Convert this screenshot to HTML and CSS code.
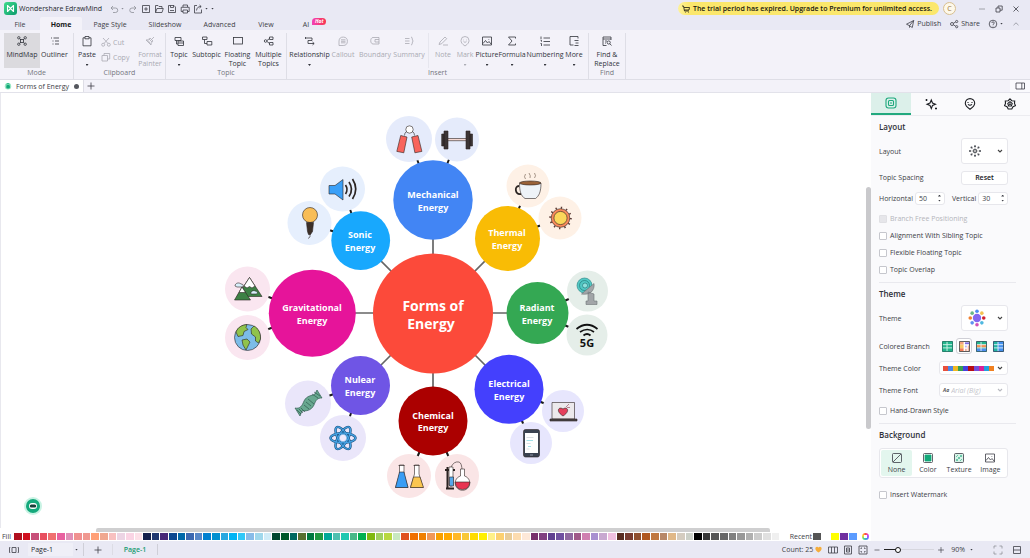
FILE: index.html
```html
<!DOCTYPE html>
<html lang="en">
<head>
<meta charset="utf-8">
<title>Wondershare EdrawMind</title>
<link rel="stylesheet" href="styles.css">
</head>
<body>
<svg class="sprite" aria-hidden="true">
  <defs>
    <linearGradient id="logo-fill" x1="0" y1="0" x2="1" y2="1"><stop offset="0" stop-color="#3fdc8c"/><stop offset="1" stop-color="#0c9a6c"/></linearGradient>
  </defs>
  <symbol id="i-undo" viewBox="0 0 12 12"><path d="M5 3 3 5l2 2M3 5h4.500a2 2 0 0 1 0 4.500H5"/></symbol>
  <symbol id="i-redo" viewBox="0 0 12 12"><path d="M7 3l2 2-2 2M9 5H5a2 2 0 0 0 0 4.500h2"/></symbol>
  <symbol id="i-new" viewBox="0 0 12 12"><path d="M2.500 2.500h7v7h-7zM6 4.200v3.600M4.200 6h3.600"/></symbol>
  <symbol id="i-open" viewBox="0 0 12 12"><path d="M2.500 9.500v-7h2.500l1 1h3v2M2.500 9.500h6.500l1.300-4H4z"/></symbol>
  <symbol id="i-save" viewBox="0 0 12 12"><path d="M2.500 2.500h5.500l1.500 1.500v5.500h-7zM4.500 2.500v2h3v-2M4 7.500h4"/></symbol>
  <symbol id="i-print" viewBox="0 0 12 12"><path d="M4 4V2h4.500v2M4 8.500H2.200V4.300h8v4.200H8.500M4 7h4.500v3H4z"/></symbol>
  <symbol id="i-export" viewBox="0 0 12 12"><path d="M5 2.500H2.500v7.500h7V6.500M4.500 7.500c.3-2.500 1.500-4 4.500-4M7.500 2l1.700 1.500L7.500 5"/></symbol>
  <symbol id="i-cart" viewBox="0 0 12 12"><path d="M2 3h1.500l1 5H9M4 4.500h5.500L9 7H4.500M5 9.500h.5M8.500 9.500H9"/></symbol>
  <symbol id="i-min" viewBox="0 0 12 12"><path d="M3 6h6"/></symbol>
  <symbol id="i-restore" viewBox="0 0 12 12"><path d="M3 5h4v4H3zM5 5V3h4.200v4.200H7"/></symbol>
  <symbol id="i-close" viewBox="0 0 12 12"><path d="M3.500 3.500l5 5M8.500 3.500l-5 5"/></symbol>
  <symbol id="i-send" viewBox="0 0 12 12"><path d="M2.500 6.200 9.700 2.500 8.300 9.500 5.500 7.700zM9.700 2.500 5.500 7.700v2"/></symbol>
  <symbol id="i-share" viewBox="0 0 12 12"><circle cx="4" cy="6" r="1.500"/><circle cx="8.700" cy="3.500" r="1.100"/><circle cx="8.700" cy="8.700" r="1.100"/><path d="M5.300 5.300 7.700 4M5.300 6.800l2.400 1.400"/></symbol>
  <symbol id="i-help" viewBox="0 0 12 12"><circle cx="6" cy="6" r="3.800"/><path d="M4.800 5c0-1.600 2.500-1.500 2.500 0C7.300 6 6 5.800 6 6.900M6 7.800v.6"/></symbol>
  <symbol id="i-up" viewBox="0 0 12 12"><path d="M3.500 7.200 6 4.800l2.500 2.400"/></symbol>
  <symbol id="i-down" viewBox="0 0 8 8"><path d="M2 3l2 2 2-2"/></symbol>
  <symbol id="i-mindmap" viewBox="0 0 12 12"><rect x="4.500" y="4.500" width="3" height="3"/><circle cx="2.800" cy="2.800" r="1.200"/><circle cx="9.200" cy="2.800" r="1.200"/><circle cx="2.800" cy="9.200" r="1.200"/><circle cx="9.200" cy="9.200" r="1.200"/><path d="M3.600 3.600l1 1M8.400 3.600l-1 1M3.600 8.400l1-1M8.400 8.400l-1-1"/></symbol>
  <symbol id="i-outliner" viewBox="0 0 12 12"><path d="M2 3h1M4.500 3H10M3.500 6h1M6 6h4M3.500 9h1M6 9h4"/></symbol>
  <symbol id="i-paste" viewBox="0 0 12 12"><path d="M4 2.800H2v8h8v-8H8M4 1.500h4v2.300H4z"/></symbol>
  <symbol id="i-cut" viewBox="0 0 12 12"><circle cx="3.200" cy="8.700" r="1.500"/><circle cx="8.800" cy="8.700" r="1.500"/><path d="M8 7.500 3 2M4 7.500 9 2"/></symbol>
  <symbol id="i-copy" viewBox="0 0 12 12"><path d="M2 4.500h5.500V10H2zM4 4.500v-2h5.700V8H7.500"/></symbol>
  <symbol id="i-brush" viewBox="0 0 12 12"><path d="M2 5c2 0 3-1 4-2l3 3C8 7 7 8 7 10zM7.500 4.500 10 2M3.500 5l3 3.500M5 4l3 3"/></symbol>
  <symbol id="i-topic" viewBox="0 0 12 12"><path d="M2 2.500h6v3H2zM3.500 5.500V9h1.500M5 6h5.500v4.500H5zM5 8h5.500"/></symbol>
  <symbol id="i-subtopic" viewBox="0 0 12 12"><path d="M1.500 2h4.500v2.500H1.500zM3.500 4.500v4h2.500M6 6.500h4.800v3.500H6z"/></symbol>
  <symbol id="i-floating" viewBox="0 0 12 12"><rect x="1.500" y="2.500" width="9" height="6.500"/></symbol>
  <symbol id="i-multiple" viewBox="0 0 12 12"><circle cx="2.600" cy="6" r="1.300"/><path d="M4 5.500 6.500 3.500M4 6.500l2.500 2M6.500 2h3.500v2.500H6.500zM6.500 7.500h3.500V10H6.500z"/></symbol>
  <symbol id="i-relation" viewBox="0 0 12 12"><path d="M1.500 3h6.500v2.500H4v3h6M8.500 7l1.700 1.500L8.500 10M1.500 2v2"/></symbol>
  <symbol id="i-callout" viewBox="0 0 12 12"><path d="M2 10.500V6a4.200 4.200 0 1 1 4.200 4.500zM4 4.800h4.500M4 6.300h4.500M4 7.800h4.500"/></symbol>
  <symbol id="i-boundary" viewBox="0 0 12 12"><path d="M10 2.500H4C1 2.500 1 9 4 9h6zM6 4.500h4M6 4.500v2.500h4"/></symbol>
  <symbol id="i-summary" viewBox="0 0 12 12"><path d="M2 3.500h4.500M2 6h4.500M2 8.500h4.500M8 2q1.300 0 1.300 2 0 2 1 2-1 0-1 2 0 2-1.300 2"/></symbol>
  <symbol id="i-note" viewBox="0 0 12 12"><path d="M2 9.500 3 7l5-5 1.700 1.700-5 5zM6 10h5"/></symbol>
  <symbol id="i-mark" viewBox="0 0 12 12"><path d="M6 11C3 9 2 7.500 2 5.500a4 4 0 0 1 8 0C10 7.500 9 9 6 11zM4.500 4.700v.6M7.500 4.700v.6M4.500 6.700q1.500 1.200 3 0"/></symbol>
  <symbol id="i-picture" viewBox="0 0 12 12"><path d="M1.500 2h9v8h-9zM2 8.500l2.500-3 2 2.500 1.500-1.500 2 2.500M7.800 4v.6"/></symbol>
  <symbol id="i-sigma" viewBox="0 0 12 12"><path d="M9.500 3.500V2h-7L6 6l-3.500 4h7V8.500"/></symbol>
  <symbol id="i-number" viewBox="0 0 12 12"><path d="M2 1.500V4M1.500 5.200h1v1.500M1.500 8.500h1V11M4.500 3H11M4.500 6.500H11M4.500 10H11"/></symbol>
  <symbol id="i-more" viewBox="0 0 12 12"><path d="M10 3.500V1.500H2V10h3.500M6.500 5.500h4M7.500 8h3M6.500 10.500h4"/></symbol>
  <symbol id="i-find" viewBox="0 0 12 12"><path d="M10 5V2H2v8.500h3.500M2 4h8M4 6h2M4 8h1"/><circle cx="7.700" cy="7.500" r="1.600"/><path d="M8.800 8.700l1.700 1.800"/></symbol>
  <symbol id="i-plus" viewBox="0 0 12 12"><path d="M6 2.500v7M2.500 6h7"/></symbol>
  <symbol id="i-panel" viewBox="0 0 12 12"><path d="M2 3h8.500v6H2zM7.800 3v6"/></symbol>
  <symbol id="i-tab-layout" viewBox="0 0 12 12"><rect x="1" y="1" width="10" height="10" rx="2.500"/><rect x="3.500" y="3.500" width="5" height="5" rx="1"/><path d="M5 6h2"/></symbol>
  <symbol id="i-tab-star" viewBox="0 0 12 12"><path d="M6.300 2 7.500 5l3 1.200-3 1.300-1.200 3-1.300-3L2 6.200 5 5zM1.500 1v2M.500 2h2M11 9.500v2M10 10.500h2"/></symbol>
  <symbol id="i-tab-mark" viewBox="0 0 12 12"><path d="M6 11.300C2.500 9 1.300 7.500 1.300 5.300a4.700 4.700 0 0 1 9.400 0C10.700 7.500 9.500 9 6 11.300zM4 4v.9M8 4v.9M4 6.300q2 1.900 4 0"/></symbol>
  <symbol id="i-tab-style" viewBox="0 0 12 12"><path d="M6 .8 7.800 2.700l2.900.2-.2 2.600 1 2.200-2.500 1L7.800 11H4.200L3 8.700l-2.500-1 1-2.200-.2-2.600 2.900-.2z"/><path d="M6 3.800 8.200 5.400 7.400 8H4.600L3.800 5.400z"/><circle cx="6" cy="6.200" r=".4"/></symbol>
  <symbol id="i-none" viewBox="0 0 12 12"><rect x="1.500" y="1.500" width="9" height="9" rx="1"/><path d="M2 10l8-8"/></symbol>
  <symbol id="i-color" viewBox="0 0 12 12"><rect x="1.500" y="1.500" width="9" height="9" rx="1"/><path d="M3 3h6v6H3z" fill="#12a878" stroke="#12a878"/></symbol>
  <symbol id="i-texture" viewBox="0 0 12 12"><rect x="1.500" y="1.500" width="9" height="9" rx="1" fill="#d8f4e8"/><path d="M3 5l2-2M3 9l6-6M7 9l2-2M3 7l2 2M5 5l2 2M7 3l2 2" stroke="#3fb48e" stroke-width=".7"/></symbol>
  <symbol id="i-book" viewBox="0 0 12 12"><path d="M4 3.500h4v5H4M4 3.500v5M1.500 3.500v5M10.500 3.500v5M1.500 3.500h.8M9.700 3.500h.8M1.500 8.500h.8M9.700 8.500h.8"/></symbol>
  <symbol id="i-columns" viewBox="0 0 12 12"><path d="M1.500 3h9v6h-9zM4.500 3v6M7.500 3v6"/></symbol>
  <symbol id="i-page" viewBox="0 0 12 12"><path d="M2.500 2v8M9.500 2v8M2.500 2h7M2.500 10h7M4.500 4h3v4h-3zM4.500 6h3"/></symbol>
  <symbol id="i-fit" viewBox="0 0 12 12"><path d="M2 2h8v8H2zM4 5V4h1M7 4h1v1M8 7v1H7M5 8H4V7"/></symbol>
  <symbol id="i-full" viewBox="0 0 12 12"><path d="M2 4.500V2h2.500M7.500 2H10v2.500M10 7.500V10H7.500M4.500 10H2V7.500"/></symbol>
  <symbol id="i-split" viewBox="0 0 12 12"><path d="M4 2.500H2.500v7H4M8 2.500h1.500v7H8M2.500 6h7M4 2.500h4M4 9.500h4"/></symbol>
</svg>

<header class="title-bar">
  <svg class="logo" viewBox="0 0 13 13"><rect width="13" height="13" rx="3" fill="url(#logo-fill)"/><path d="M3.500 3.500v6l3-3 3 3v-6l-3 3z" fill="none" stroke="#fff" stroke-width="1.100" stroke-linejoin="round"/></svg>
  <h1>Wondershare EdrawMind</h1>
  <div class="quick">
    <button class="pale" aria-label="Undo"><svg class="icon"><use href="#i-undo"/></svg></button>
    <i class="caret pale"></i>
    <button class="pale" aria-label="Redo"><svg class="icon"><use href="#i-redo"/></svg></button>
    <button aria-label="New"><svg class="icon"><use href="#i-new"/></svg></button>
    <button aria-label="Open"><svg class="icon"><use href="#i-open"/></svg></button>
    <button aria-label="Save"><svg class="icon"><use href="#i-save"/></svg></button>
    <button aria-label="Print"><svg class="icon"><use href="#i-print"/></svg></button>
    <button aria-label="Export"><svg class="icon"><use href="#i-export"/></svg></button>
    <i class="caret"></i>
    <i class="caret"></i>
  </div>
  <a class="trial" href="#"><svg class="icon"><use href="#i-cart"/></svg>The trial period has expired. Upgrade to Premium for unlimited access.</a>
  <button class="avatar">C</button>
  <div class="window">
    <button aria-label="Minimize" class="pale"><svg class="icon"><use href="#i-min"/></svg></button>
    <button aria-label="Restore"><svg class="icon"><use href="#i-restore"/></svg></button>
    <button aria-label="Close"><svg class="icon"><use href="#i-close"/></svg></button>
  </div>
</header>

<nav class="menu-bar">
  <div class="menus">
    <button>File</button><button class="current">Home</button><button>Page Style</button><button>Slideshow</button><button>Advanced</button><button>View</button><button class="ai">AI<span class="hot">Hot</span></button>
  </div>
  <div class="menu-side">
    <button><svg class="icon"><use href="#i-send"/></svg>Publish</button>
    <button><svg class="icon"><use href="#i-share"/></svg>Share</button>
    <button aria-label="Help"><svg class="icon"><use href="#i-help"/></svg><i class="caret"></i></button>
    <button aria-label="Collapse ribbon" class="pale"><svg class="icon"><use href="#i-up"/></svg></button>
  </div>
</nav>

<section class="ribbon">
  <div class="group">
    <div class="tools mode">
      <button class="tool on"><svg class="icon"><use href="#i-mindmap"/></svg>MindMap</button>
      <button class="tool"><svg class="icon"><use href="#i-outliner"/></svg>Outliner</button>
    </div>
    <p>Mode</p>
  </div>
  <div class="group">
    <div class="tools clip">
      <button class="tool"><svg class="icon"><use href="#i-paste"/></svg>Paste<i class="caret"></i></button>
      <div class="stack">
        <button class="off"><svg class="icon"><use href="#i-cut"/></svg>Cut</button>
        <button class="off"><svg class="icon"><use href="#i-copy"/></svg>Copy</button>
      </div>
      <button class="tool off"><svg class="icon"><use href="#i-brush"/></svg>Format<br>Painter</button>
    </div>
    <p>Clipboard</p>
  </div>
  <div class="group">
    <div class="tools topics">
      <button class="tool"><svg class="icon"><use href="#i-topic"/></svg>Topic<i class="caret"></i></button>
      <button class="tool"><svg class="icon"><use href="#i-subtopic"/></svg>Subtopic</button>
      <button class="tool"><svg class="icon"><use href="#i-floating"/></svg>Floating<br>Topic</button>
      <button class="tool"><svg class="icon"><use href="#i-multiple"/></svg>Multiple<br>Topics</button>
    </div>
    <p>Topic</p>
  </div>
  <div class="group">
    <div class="tools insert">
      <button class="tool"><svg class="icon"><use href="#i-relation"/></svg>Relationship<i class="caret"></i></button>
      <button class="tool off"><svg class="icon"><use href="#i-callout"/></svg>Callout</button>
      <button class="tool off"><svg class="icon"><use href="#i-boundary"/></svg>Boundary</button>
      <button class="tool off"><svg class="icon"><use href="#i-summary"/></svg>Summary</button>
      <i class="rule"></i>
      <button class="tool off"><svg class="icon"><use href="#i-note"/></svg>Note</button>
      <button class="tool off"><svg class="icon"><use href="#i-mark"/></svg>Mark<i class="caret"></i></button>
      <button class="tool"><svg class="icon"><use href="#i-picture"/></svg>Picture<i class="caret"></i></button>
      <button class="tool"><svg class="icon"><use href="#i-sigma"/></svg>Formula<i class="caret"></i></button>
      <button class="tool"><svg class="icon"><use href="#i-number"/></svg>Numbering<i class="caret"></i></button>
      <button class="tool"><svg class="icon"><use href="#i-more"/></svg>More<i class="caret"></i></button>
    </div>
    <p>Insert</p>
  </div>
  <div class="group">
    <div class="tools find">
      <button class="tool"><svg class="icon"><use href="#i-find"/></svg>Find &amp;<br>Replace</button>
    </div>
    <p>Find</p>
  </div>
</section>

<div class="doc-bar">
  <button class="doc"><svg class="doc-icon" viewBox="0 0 8 8"><circle cx="4" cy="4.300" r="3.200" fill="#9be8c4"/><rect x="2.300" y="3" width="3.600" height="3.500" rx="1" fill="#14a878"/><path d="M3 3V1.500h2V3" fill="none" stroke="#3cc490"/></svg>Forms of Energy<span class="dot"></span></button>
  <button class="add" aria-label="New tab"><svg class="icon"><use href="#i-plus"/></svg></button>
  <button class="panel-toggle" aria-label="Toggle panel"><svg class="icon"><use href="#i-panel"/></svg></button>
</div>

<div class="work">
  <main class="stage">
    <div class="canvas">
      <svg class="map" viewBox="1 93 865 435" role="img" aria-label="Forms of Energy mind map">
        <g class="branches">
          <path d="M433 313V200M433 313l75-75M433 313h104M433 313l76 76M433 313v108M433 313l-72 72M433 313H312M433 313l-72-72"/>
        </g>
        <g class="twigs">
          <path d="M433 200 409 139M433 200 457 139M507 238l21-52M507 238l53-20M537 313l50-22M537 313l50 22M509 389l54 22M509 389l22 54M433 421l-24 55M433 421l24 55M360 385l-52 18M360 385l-17 53M312 313l-65-24M312 313l-65 24M361 241l-52-18M361 241l-18-52"/>
        </g>
        <g class="leaves">
          <g fill="#e5ebfb"><circle cx="409" cy="139" r="23"/><circle cx="457" cy="139.500" r="22"/></g>
          <g fill="#fef1e6"><circle cx="528" cy="186" r="21.500"/><circle cx="560" cy="218" r="21.500"/></g>
          <g fill="#e5eee9"><circle cx="587.500" cy="291" r="20.500"/><circle cx="587" cy="335" r="20.500"/></g>
          <g fill="#e7e6fd"><circle cx="563" cy="411" r="21"/><circle cx="531" cy="443" r="21"/></g>
          <g fill="#fae5e6"><circle cx="409" cy="476" r="22"/><circle cx="457" cy="476" r="22"/></g>
          <g fill="#eae6fa"><circle cx="308" cy="403.500" r="23"/><circle cx="343" cy="438" r="23"/></g>
          <g fill="#fae6f0"><circle cx="247.500" cy="289" r="22.500"/><circle cx="247.500" cy="337.500" r="22.500"/></g>
          <g fill="#e6effd"><circle cx="309.500" cy="223" r="22"/><circle cx="342.500" cy="189" r="22.500"/></g>
        </g>
        <g>
          <circle cx="433" cy="200" r="39.700" fill="#4285f4"/>
          <circle cx="507.500" cy="238.500" r="32.500" fill="#f9bc05"/>
          <circle cx="537.500" cy="313" r="31" fill="#34a853"/>
          <circle cx="509" cy="389.300" r="34.500" fill="#4440fd"/>
          <circle cx="433" cy="421" r="34.500" fill="#ab0000"/>
          <circle cx="360.500" cy="385.500" r="29.500" fill="#6f55e5"/>
          <circle cx="312.300" cy="313.300" r="43.500" fill="#e6149a"/>
          <circle cx="360.700" cy="240.600" r="29.400" fill="#18a8fd"/>
          <circle cx="433" cy="313.500" r="60" fill="#fc4a3a"/>
        </g>
        <g class="names">
          <text x="433" y="198">Mechanical<tspan x="433" dy="13">Energy</tspan></text>
          <text x="507" y="236">Thermal<tspan x="507" dy="13">Energy</tspan></text>
          <text x="537" y="311">Radiant<tspan x="537" dy="13">Energy</tspan></text>
          <text x="509" y="387">Electrical<tspan x="509" dy="13">Energy</tspan></text>
          <text x="433" y="419">Chemical<tspan x="433" dy="12">Energy</tspan></text>
          <text x="360" y="383">Nulear<tspan x="360" dy="13">Energy</tspan></text>
          <text x="312" y="311">Gravitational<tspan x="312" dy="13">Energy</tspan></text>
          <text x="360" y="238">Sonic<tspan x="360" dy="13">Energy</tspan></text>
          <text class="root" x="433" y="311">Forms of<tspan x="431" dy="18">Energy</tspan></text>
        </g>

        <g class="art">
          <!-- hand gripper -->
          <circle cx="409.500" cy="129.500" r="3.700" fill="#fff"/>
          <path d="M406.500 131.500q-2 1-2 4M412.500 131.500q2 1 2 4" fill="none"/>
          <path d="M400.700 135.500l6.300 1.500-3.200 15.800-7-1.400zM418 135.500l-6.300 1.500 3.200 15.800 7-1.400z" fill="#f8645c"/>
          <!-- dumbbell -->
          <path d="M447 138.500h20v2.200h-20z" fill="#f7d9d2"/>
          <path d="M444 131h4v18h-4zM466 131h4v18h-4zM441.700 134h2.300v12h-2.300zM470 134h2.500v12H470z" fill="#3b3434"/>
          <!-- cup -->
          <path d="M519 186c-5 0-4 9 2 8" fill="none" stroke-width="1.800"/>
          <path d="M519.500 183h21.500c0 9-2 13-5.500 15.500H525c-4-2.500-5.500-7-5.500-15.500z" fill="#eef3f8"/>
          <ellipse cx="530.300" cy="183" rx="10.700" ry="2" fill="#9a6238"/>
          <path d="M525.500 179q-2-2 0-5M530 178q1-2-1-5M534.500 178q2-2 0-5" fill="none" stroke="#6a5548"/>
          <!-- sun -->
          <circle cx="560.500" cy="218" r="10.300" fill="none" stroke="#5a3a34" stroke-width="2" stroke-dasharray="1.400 3.990"/>
          <circle cx="560.500" cy="218" r="9.300" fill="#f98a5c"/>
          <circle cx="560.500" cy="218" r="6.600" fill="#fcd75a"/>
          <!-- dish -->
          <circle cx="584.500" cy="285.500" r="7.500" fill="#52c8c4" stroke="#27807f"/>
          <circle cx="584.500" cy="285.500" r="5" fill="none" stroke="#1d6e70"/>
          <circle cx="585" cy="285.500" r="2.500" fill="#8ee0dc" stroke="#1d6e70"/>
          <path d="M594 283.500c1 7-4 12-12.500 10.500zM588 292l6 2v7h3v3.500h-11v-3.500h2z" fill="#a2a5a8" stroke="#6d7276"/>
          <!-- 5G -->
          <path d="M576.500 329q10.500-8.500 21 0M580 332q7.500-5 14 0M583.500 335.500q3.500-3 7 0" fill="none" stroke="#111" stroke-width="1.700"/>
          <!-- laptop -->
          <path d="M552 402.500h22.500V419H552z" fill="#ece9ec"/>
          <path d="M550 419h27v2h-27z" fill="#4a4748"/>
          <path d="M563 416c-8-5-4-10 0-7 4-3 8 2 0 7z" fill="#e5405c"/><path d="M566 407l3-3M567 407.500h3" stroke="#8e3c52" fill="none"/>
          <!-- phone -->
          <rect x="523.500" y="429.500" width="16" height="27.500" rx="2" fill="#3a4250"/>
          <path d="M525 433h13v20h-13z" fill="#fff" stroke="none"/>
          <path d="M526.500 437.500h7M526.500 443.500h4M526.500 449h3" stroke="#c3cad0"/><path d="M526.500 440.500h6.500M528 446.500h3" stroke="#62cbd8"/>
          <path d="M530 455h3" stroke="#ccd"/>
          <!-- flasks -->
          <path d="M399.500 465v9l-4 13.500h12.500l-4-13.500v-9z" fill="#fff"/><path d="M399.500 472h4.500l4 15.500h-12.500z" fill="#3a9df4"/>
          <path d="M414.500 465v9l-4 13.500h12.500l-4-13.500v-9z" fill="#fff"/><path d="M413.500 477h6.500l3.500 10.500h-13z" fill="#fbc650"/>
          <path d="M398.500 465.500h6M413.500 465.500h6"/>
          <!-- lab stand -->
          <path d="M447.500 467v21M445 470h10M446 488.500h8" stroke-width="2"/>
          <path d="M449 467h4v18q-2 2.500-4 0z" fill="#fff"/><path d="M449.500 477h4v9h-4z" fill="#55a8ea"/>
          <path d="M451 467q3-6 8-5 3 1 3 9" fill="none"/>
          <path d="M460.500 469v7a7.300 7.300 0 1 0 4 0v-7z" fill="#fff"/><path d="M455.200 482h14.700q-.8 7.500-7.400 7.500t-7.300-7.500z" fill="#e83552"/>
          <!-- DNA -->
          <path d="M317 390l5 8c-5 0-6 2-8 7-3 6-8 6-12 6l-2 5-5-8c5 1 7-2 9-7 3-6 8-5 11-7z" fill="#68a890" stroke="#234d41"/>
          <path d="M314 392l6 4M312 394l6 4M308 399l6 5M306 402l5 4M304 405l5 4M301 408l4 4M299 409l4 4M297 410l4 4" stroke="#234d41"/>
          <!-- atom -->
          <g fill="none" stroke="#164e7e" stroke-width="2.400"><ellipse cx="343" cy="438" rx="12.500" ry="4.800"/><ellipse cx="343" cy="438" rx="12.500" ry="4.800" transform="rotate(60 343 438)"/><ellipse cx="343" cy="438" rx="12.500" ry="4.800" transform="rotate(120 343 438)"/></g>
          <g fill="none" stroke="#46a3e4" stroke-width="1.200"><ellipse cx="343" cy="438" rx="12.500" ry="4.800"/><ellipse cx="343" cy="438" rx="12.500" ry="4.800" transform="rotate(60 343 438)"/><ellipse cx="343" cy="438" rx="12.500" ry="4.800" transform="rotate(120 343 438)"/></g>
          <circle cx="343" cy="438" r="3.800" fill="#eee9fb" stroke="#46a3e4"/>
          <!-- mountains -->
          <path d="M249.500 277.500l12.500 19h-25z" fill="#3d8145"/><path d="M249.500 277.500l5.500 8.500-3 2-2.500-1.500-2.500 1.500-3-2z" fill="#fff"/>
          <path d="M242 287l8.500 13h-16z" fill="#3d8145"/><path d="M242 287l3.500 5.500h-6.500z" fill="#fff"/>
          <path d="M235 286c0-3 4-4 6-2 3 0 3 3 0 3h-4zM251 294c-1-3 3-4 4-3 3 0 3 3 1 3z" fill="#d8f0fb"/>
          <!-- globe -->
          <circle cx="247.500" cy="337.500" r="13" fill="#7cbce8"/>
          <path d="M236 332c2-5 6-7 11-7.500l-1 3 2 2-4 2-1 4-5 1zM251 329l3-3c4 2 7 7 6.500 13l-2 4-3-2v-4l-4-3zM242 340l5-1 3 3-2 4-2 4-3-5z" fill="#90c34c"/>
          <!-- microphone -->
          <circle cx="310" cy="215" r="7.500" fill="#f8bd57"/>
          <path d="M306.500 222.500h7l-1 9-2 3h-2l-1-3z" fill="#3c3029"/><path d="M310 234v3l-2 1.500" fill="none"/>
          <!-- speaker -->
          <path d="M329 185.500h6l8-6V200l-8-6h-6z" fill="#3aa0f8"/>
          <path d="M345.500 185q3 4.500 0 9M349 182q5 7.500 0 14.500M352.500 179q6.500 10 0 20" fill="none" stroke-width="1.700"/>
        </g>
        <text class="five-g" x="587" y="347">5G</text>
      </svg>
      <button class="helper" aria-label="Assistant"><svg viewBox="0 0 16 16"><circle cx="8" cy="8" r="7" fill="#15a97c"/><rect x="4" y="5" width="8" height="6" rx="3" fill="#fff"/><rect x="4.800" y="6.500" width="6.400" height="3" rx="1.500" fill="#163f38"/></svg></button>
    </div>
    <div class="v-track"><div class="v-thumb"></div></div>
    <div class="h-track"><div class="h-thumb"></div></div>
    <div class="palette">
      <span>Fill</span>
      <div class="swatches" id="swatches"></div>
      <div class="recent"><span>Recent</span><i class="sw-gray"></i><i></i><i class="sw-yellow"></i><i class="sw-purple"></i><i class="sw-blue"></i><button class="wheel" aria-label="More colors"></button></div>
    </div>
  </main>

  <aside class="side">
    <div class="side-tabs">
      <button class="current" aria-label="Layout"><svg class="icon"><use href="#i-tab-layout"/></svg></button>
      <button aria-label="AI"><svg class="icon"><use href="#i-tab-star"/></svg></button>
      <button aria-label="Marks"><svg class="icon"><use href="#i-tab-mark"/></svg></button>
      <button aria-label="Style"><svg class="icon"><use href="#i-tab-style"/></svg></button>
    </div>

    <section class="block">
      <h2>Layout</h2>
      <div class="row tall"><span>Layout</span>
        <button class="picker" aria-label="Layout"><svg class="thumb" viewBox="0 0 14 14" fill="#40444c"><circle cx="7" cy="7" r="1.800" fill="#fff" stroke="#40444c"/><circle cx="7" cy="2.300" r="1"/><circle cx="7" cy="11.700" r="1"/><circle cx="2" cy="7" r="1"/><circle cx="12" cy="7" r="1"/><circle cx="3.500" cy="3.500" r="1"/><circle cx="10.500" cy="3.500" r="1"/><circle cx="3.500" cy="10.500" r="1"/><circle cx="10.500" cy="10.500" r="1"/><path d="M7 2.500v9M2 7h10M3.500 3.500l7 7M10.500 3.500l-7 7" stroke="#888" stroke-width=".4"/></svg><svg class="chev"><use href="#i-down"/></svg></button>
      </div>
      <div class="row spacing"><span>Topic Spacing</span><button class="reset">Reset</button></div>
      <div class="row numbers">
        <label for="h-space">Horizontal</label><span class="spin"><input id="h-space" value="50"><span class="arrows"><i class="tri-up"></i><i class="caret"></i></span></span>
        <label for="v-space">Vertical</label><span class="spin"><input id="v-space" value="30"><span class="arrows"><i class="tri-up"></i><i class="caret"></i></span></span>
      </div>
      <div class="checks">
        <label class="disabled"><input type="checkbox" disabled>Branch Free Positioning</label>
        <label><input type="checkbox">Alignment With Sibling Topic</label>
        <label><input type="checkbox">Flexible Floating Topic</label>
        <label><input type="checkbox">Topic Overlap</label>
      </div>
    </section>

    <section class="block">
      <h2>Theme</h2>
      <div class="row tall"><span>Theme</span>
        <button class="picker" aria-label="Theme"><svg class="thumb big" viewBox="0 0 16 16"><circle cx="8" cy="8" r="3.700" fill="#8468f0"/><circle cx="8" cy="2" r="1.600" fill="#4a8cf0"/><circle cx="12.300" cy="3.700" r="1.600" fill="#f4c050"/><circle cx="14" cy="8" r="1.600" fill="#d02030"/><circle cx="12.300" cy="12.300" r="1.600" fill="#50b8e0"/><circle cx="8" cy="14" r="1.600" fill="#d050b8"/><circle cx="3.700" cy="12.300" r="1.600" fill="#6090f0"/><circle cx="2" cy="8" r="1.600" fill="#f08030"/><circle cx="3.700" cy="3.700" r="1.600" fill="#68b888"/></svg><svg class="chev"><use href="#i-down"/></svg></button>
      </div>
      <div class="row branch"><span>Colored Branch</span>
        <div class="options">
          <button aria-label="Style 1"><svg viewBox="0 0 12 12"><path d="M.500.500h11v11H.500z" fill="#22b58c" stroke="#1b7460"/><path d="M1 4h10M1 7.500h10M5.500 1v10" stroke="#d4f4ea"/></svg></button>
          <button class="picked" aria-label="Style 2"><svg viewBox="0 0 12 12"><path d="M.500.500h11v11H.500z" fill="#fff" stroke="#444"/><path d="M1 1h4v3H1z" fill="#f5a37c"/><path d="M1 4h4v4H1z" fill="#f8c864"/><path d="M1 8h4v3H1z" fill="#f07a58"/><path d="M6.500 1.500h4.500v2H6.500z" fill="#7a6ae0"/><path d="M6.500 5h2v2h-2z" fill="#b8b0f4"/><path d="M6.500 8.500h2V11h-2zM9.500 5h1.500v6H9.500z" fill="#f0b4a0"/></svg></button>
          <button aria-label="Style 3"><svg viewBox="0 0 12 12"><path d="M.500.500h11v11H.500z" fill="#22b58c" stroke="#2c5560"/><path d="M1 4h10v3H1z" fill="#f58e50"/><path d="M1 8h10v3H1z" fill="#4e8ef0"/><path d="M1 4h10M1 7.500h10M5.500 1v10" stroke="#e8f0f4"/></svg></button>
          <button aria-label="Style 4"><svg viewBox="0 0 12 12"><path d="M.500.500h11v11H.500z" fill="#4490ee" stroke="#2c4a60"/><path d="M1 1h4v10H1z" fill="#22b5a0"/><path d="M1 4h10M1 7.500h10M5.500 1v10" stroke="#dcecf8"/></svg></button>
        </div>
      </div>
      <div class="row field"><span>Theme Color</span>
        <button class="combo" aria-label="Theme Color"><span class="strip"><i></i><i></i><i></i><i></i><i></i><i></i><i></i><i></i><i></i><i></i></span><svg class="chev"><use href="#i-down"/></svg></button>
      </div>
      <div class="row field"><label for="font">Theme Font</label>
        <span class="combo faint"><b>Aa</b><select id="font"><option>Arial (Big)</option></select><svg class="chev"><use href="#i-down"/></svg></span>
      </div>
      <div class="checks"><label><input type="checkbox">Hand-Drawn Style</label></div>
    </section>

    <section class="block">
      <h2>Background</h2>
      <div class="segments">
        <button class="current"><svg class="icon"><use href="#i-none"/></svg>None</button>
        <button><svg class="icon"><use href="#i-color"/></svg>Color</button>
        <button><svg class="icon"><use href="#i-texture"/></svg>Texture</button>
        <button><svg class="icon"><use href="#i-picture"/></svg>Image</button>
      </div>
      <div class="checks last"><label><input type="checkbox">Insert Watermark</label></div>
    </section>
  </aside>
</div>

<footer class="status">
  <button class="outline-toggle" aria-label="Pages"><svg class="icon"><use href="#i-book"/></svg></button>
  <div class="page-pick"><select aria-label="Page"><option>Page-1</option></select><i class="caret"></i></div>
  <button class="page-add" aria-label="Add page"><svg class="icon"><use href="#i-plus"/></svg></button>
  <button class="page-tab">Page-1</button>
  <div class="status-side">
    <span>Count: 25</span><svg class="heart" viewBox="0 0 8 8"><path d="M4 7.500C-1 4.500 0 .5 2.500.8 3.500.9 4 1.800 4 1.800S4.500.9 5.500.8C8 .5 9 4.500 4 7.500z" fill="#f5ad3c"/></svg>
    <button aria-label="Columns"><svg class="icon"><use href="#i-columns"/></svg></button>
    <button aria-label="Page view"><svg class="icon"><use href="#i-page"/></svg></button>
    <button aria-label="Fit"><svg class="icon"><use href="#i-fit"/></svg></button>
    <button class="zoom-btn" aria-label="Zoom out"><svg class="icon"><use href="#i-min"/></svg></button>
    <input class="zoom" type="range" min="0" max="100" value="24" aria-label="Zoom">
    <button class="zoom-btn" aria-label="Zoom in"><svg class="icon"><use href="#i-plus"/></svg></button>
    <button class="percent">90%<i class="caret"></i></button>
    <button class="pale full" aria-label="Full screen"><svg class="icon"><use href="#i-full"/></svg></button>
    <button class="split" aria-label="Fit width"><svg class="icon"><use href="#i-split"/></svg></button>
  </div>
</footer>
<script src="script.js"></script>
</body>
</html>
```
FILE: script.js
```js
const colors = `b01020 d01020 c8507a e85060 f07070 e860a0 e090b8 f09090 f09890 ffa078 f0a890 f8c0c0 ecd4e4 fad4e4 fde0e8
14204c 203870 482878 0c4890 0068a8 3c68b0 5888c8 0080d0 0090d0 28a8e0 00b4f4 30c8f8 88bce8 a0d8ec d0ecf8
004830 005828 006860 587030 007840 209840 00a898 50c0b0 20c8b0 48b888 00b050 80b810 a0d060 b8d840 c8e8c0
e05020 f07000 f08000 f09858 f8a000 ffa800 ffb828 f8c838 ffdc00 fff000 fff088 fcd070 e8cc98 fcdcb0 fde8d8
78306c 804080 604090 7050a0 9068a0 a05888 d080b0 a890d0 c8a8d0 f0c0e0
582c20 783c30 905030 b05820 c07840 b88868 e0b888 d4ccc0 ccd0c8
000000 383838 555555 686868 808080 989898 b0b0b0 cccccc e0e0e0 f0f0f0`.split(/\s+/);

const holder = document.getElementById("swatches");
for (const color of colors) {
  const swatch = document.createElement("i");
  swatch.style.background = "#" + color;
  holder.append(swatch);
}
```
FILE: styles.css
```css
* { box-sizing: border-box; }

body {
  margin: 0;
  height: 100vh;
  display: flex;
  flex-direction: column;
  overflow: hidden;
  background: #fff;
  color: #3c3e46;
  font: 7px/9px "Open Sans", "Noto Sans", sans-serif;
}

button, input, select {
  margin: 0;
  padding: 0;
  border: 0;
  background: none;
  color: inherit;
  font: inherit;
  white-space: nowrap;
}

button { display: flex; align-items: center; justify-content: center; }
h1, h2, p { margin: 0; }
i { display: block; }

.sprite { position: absolute; width: 0; height: 0; }

.icon {
  width: 12px;
  height: 12px;
  flex: none;
  fill: none;
  stroke: currentColor;
  stroke-width: .8;
}

.caret { width: 3px; height: 2px; flex: none; background: currentColor; clip-path: polygon(0 0, 100% 0, 50% 100%); }
.tri-up { width: 3px; height: 2px; background: currentColor; clip-path: polygon(0 100%, 100% 100%, 50% 0); }
.pale { color: #8d8f98; }

/* Title bar */
.title-bar {
  height: 17px;
  flex: none;
  display: flex;
  align-items: center;
  padding: 0 8px 0 4px;
  background: #e9e9f4;
}
.logo { width: 13px; height: 13px; margin-right: 2px; }
.title-bar h1 { width: 82px; font-size: 7px; font-weight: 500; color: #24262c; white-space: nowrap; }
.quick { flex: 1; display: flex; align-items: center; gap: 1px; padding-left: 7px; }
.quick .caret { margin: 0 2px 0 0; }
.trial {
  display: flex;
  align-items: center;
  gap: 1px;
  height: 13px;
  padding: 0 7px 0 2px;
  border-radius: 7px;
  background: linear-gradient(90deg, #fdf29a, #fbe76c 12px);
  color: #17160e;
  font-weight: 600;
  text-decoration: none;
  white-space: nowrap;
}
.avatar {
  width: 13px;
  height: 13px;
  margin: 0 20px 0 4px;
  border: 1px solid #d8bf90;
  border-radius: 50%;
  background: #fdf8ea;
  color: #9a7038;
}
.window { display: flex; gap: 5px; }

/* Menu bar */
.menu-bar {
  height: 13px;
  flex: none;
  display: flex;
  justify-content: space-between;
  background: #e9e9f4;
}
.menus { display: grid; grid-template-columns: 40px 42px 56px 54px 55px 38px 42px; }
.menus button { position: relative; padding-top: 2px; }
.menus .current { background: #f3f2f9; font-weight: 700; color: #17181c; border-radius: 2px 2px 0 0; }
.hot {
  position: absolute;
  left: 27px;
  top: 1px;
  padding: 0 3px;
  border-radius: 4px 4px 4px 0;
  background: linear-gradient(90deg, #f23fb8, #f8384c);
  color: #fff;
  font: italic 700 5px/7px "Open Sans", "Noto Sans", sans-serif;
}
.menu-side { display: flex; padding-right: 8px; gap: 7px; }
.menu-side button { gap: 1px; }

/* Ribbon */
.ribbon {
  height: 50px;
  flex: none;
  display: flex;
  padding-top: 3px;
  border-bottom: 1px solid #dedee6;
  background: #f3f2f9;
}
.group { border-right: 1px solid #dedee6; }
.group p { line-height: 10px; text-align: center; color: #74767e; }
.tools { display: grid; height: 35px; }
.mode { grid-template-columns: 36px 29px; padding: 0 4px; }
.clip { grid-template-columns: 26px 35px 30px; }
.topics { grid-template-columns: 26px 29px 33px 29px 3px; }
.insert { grid-template-columns: 43px 24px 40px 28px 9px 22px 22px 22px 28px 38px 20px; padding: 0 4px 0 1px; }
.find { grid-template-columns: 36px; }
.tool { position: relative; flex-direction: column; justify-content: flex-start; padding-top: 2px; color: #30323a; }
.tool .icon { margin-bottom: 3px; }
.tool .caret { margin-top: 5px; }
.on { background: #dbdade; }
.off { color: #a9aab2; }
.rule { width: 1px; margin: 0 5px; background: #e6e6ee; }
.stack { display: flex; flex-direction: column; align-items: flex-start; gap: 3px; padding-top: 3px; }
.stack button { gap: 1px; }

/* Document tabs */
.doc-bar {
  height: 13px;
  flex: none;
  display: flex;
  background: #f3f2f9;
  border-bottom: 1px solid #e2e2ea;
}
.doc { width: 84px; background: #fff; border-right: 1px solid #dedee6; }
.doc-icon { width: 8px; height: 8px; margin-right: 4px; }
.dot { width: 5px; height: 5px; margin-left: 5px; border-radius: 50%; background: #55575e; }
.add { width: 14px; }
.panel-toggle { width: 20px; margin-left: auto; background: #fafafd; }

/* Work area */
.work { flex: 1; min-height: 0; display: flex; }
.stage {
  flex: 1;
  min-width: 0;
  display: grid;
  grid-template-columns: 1fr 5px;
  grid-template-rows: 1fr 4px 9px;
}
.canvas { position: relative; min-height: 0; border-left: 1px solid #e8e8ee; }
.map { display: block; width: 100%; height: 100%; }
.branches { stroke: #666; stroke-width: 1.7; }
.twigs { stroke: #1a1a1a; stroke-width: 2; }
.names { fill: #fff; font-size: 9px; font-weight: 700; text-anchor: middle; }
.root { font-size: 14px; }
.five-g { font-size: 11px; font-weight: 700; text-anchor: middle; fill: #111; }
.art { stroke: #2b2422; stroke-width: .6; }
.helper { position: absolute; left: 23px; bottom: 13px; width: 18px; height: 18px; border-radius: 50%; background: #c9f3e4; }
.helper svg { width: 16px; height: 16px; }
.v-track { padding-top: 94px; }
.v-thumb { height: 71%; border-radius: 3px; background: #c9c9cc; }
.h-track { grid-column: 1 / 3; padding: 0 101px 0 96px; }
.h-thumb { height: 4px; border-radius: 2px 2px 0 0; background: #cfcfd0; }
.palette { grid-column: 1 / 3; display: flex; align-items: center; padding: 0 2px; gap: 2px; }
.palette > span { width: 10px; }
.swatches { flex: 1; display: flex; gap: 1px; }
.swatches i { flex: 1; height: 7px; }
.recent { display: flex; align-items: center; gap: 1px; padding-left: 8px; }
.recent i { width: 8px; height: 7px; }
.sw-gray { background: #555; }
.sw-yellow { background: #ff0; }
.sw-purple { background: #7030a0; }
.sw-blue { background: #5b9bff; }
.wheel {
  width: 7px;
  height: 7px;
  margin-left: 4px;
  border-radius: 50%;
  background: radial-gradient(#fff 35%, transparent 40%), conic-gradient(#f44, #c4f, #48f, #4d8, #fd3, #f44);
}

/* Side panel */
.side { width: 159px; flex: none; background: #fafafc; }
.side-tabs { height: 23px; display: grid; grid-template-columns: repeat(4, 1fr); border-bottom: 1px solid #ececf0; color: #1d1f24; }
.side-tabs .icon { stroke-width: 1.1; }
.side-tabs .current { background: #dcf0ea; border-bottom: 2px solid #22a97e; color: #1da87c; }
.block { margin: 0 14px 0 8px; padding: 0 8px 4px 0; border-bottom: 1px solid #e9e9ee; }
.block:last-child { border-bottom: 0; }
h2 { font-size: 8px; font-weight: 600; line-height: 22px; color: #2e3038; }
.row { display: flex; align-items: center; justify-content: space-between; height: 14px; white-space: nowrap; }
.tall { height: 26px; }
.spacing { height: 27px; }
.numbers { gap: 2px; }
.branch { height: 30px; }
.field + .field { margin-top: 8px; }
.picker, .reset, .spin, .combo, .segments { border: 1px solid #e7e7ec; border-radius: 3px; background: #fff; }
.picker { width: 47px; height: 26px; justify-content: space-between; padding: 0 3px 0 6px; }
.thumb { width: 14px; height: 14px; }
.big { width: 18px; height: 18px; }
.chev { width: 8px; height: 8px; flex: none; fill: none; stroke: #444; stroke-width: 1.1; }
.reset { width: 47px; height: 14px; color: #17181c; font-weight: 600; }
.spin { display: flex; align-items: center; width: 30px; height: 13px; padding: 0 3px; }
.spin + label { margin-left: 5px; }
.spin input { flex: 1; min-width: 0; }
.arrows { display: flex; flex-direction: column; gap: 3px; }
.options { display: flex; gap: 1px; margin-right: 2px; }
.options button { width: 16px; height: 16px; border: 1px solid transparent; border-radius: 3px; }
.options .picked { border-color: #cfcfd6; background: #fff; }
.options svg { width: 11px; height: 11px; flex: none; }
.combo { display: flex; align-items: center; justify-content: space-between; width: 69px; height: 14px; padding: 0 3px; }
.strip { display: flex; width: 51px; height: 5px; }
.strip i { flex: 1; background: #e8503c; }
.strip i:nth-child(2) { background: #4a86e8; }
.strip i:nth-child(3) { background: #f0b820; }
.strip i:nth-child(4) { background: #38a050; }
.strip i:nth-child(5) { background: #4440e0; }
.strip i:nth-child(6) { background: #b80c14; }
.strip i:nth-child(7) { background: #7050d8; }
.strip i:nth-child(8) { background: #d82098; }
.strip i:nth-child(9) { background: #20a0e0; }
.strip i:nth-child(10) { background: #f08020; }
.faint { color: #c4c5cc; font-style: italic; }
.faint b { font-size: 5px; color: #555; margin-right: 2px; }
.faint .chev { stroke: #b8b9c0; }
select { appearance: none; flex: 1; min-width: 0; }
.checks { padding-top: 5px; }
.checks label { display: flex; align-items: center; gap: 3px; height: 17px; white-space: nowrap; }
.checks input { appearance: none; width: 8px; height: 8px; border: 1px solid #c6c7cd; border-radius: 1px; background: #fff; }
.checks .disabled { color: #b4b5bb; }
.disabled input { background: #e6e6ea; border-color: #e0e0e4; }
.segments { display: grid; grid-template-columns: repeat(4, 1fr); height: 30px; margin-top: 2px; padding: 1px; }
.segments button { flex-direction: column; gap: 1px; border-radius: 2px; }
.segments .current { background: #e3f6ee; }
.last { padding-top: 8px; }

/* Status bar */
.status { height: 17px; flex: none; display: flex; align-items: center; background: #e9e9f4; }
.outline-toggle { width: 28px; }
.page-pick { display: flex; align-items: center; width: 56px; height: 13px; padding-right: 5px; border-right: 1px solid #cfcfd8; }
.page-pick select { height: 13px; margin-right: 2px; padding-left: 3px; background: #efeff7; color: #26282e; }
.page-add { width: 29px; height: 11px; border-right: 1px solid #dcdce4; }
.page-tab { width: 45px; height: 11px; border-right: 1px solid #cfcfd8; color: #1a9c72; font-weight: 600; }
.status-side { display: flex; align-items: center; margin-left: auto; padding-right: 7px; gap: 3px; white-space: nowrap; }
.status-side .heart { width: 7px; height: 7px; margin: 0 2px 0 -1px; }
.zoom-btn .icon { width: 10px; height: 10px; }
.zoom { appearance: none; width: 50px; height: 8px; margin: 0 -1px; background: linear-gradient(#222, #222) 0 50% / 12px 1px no-repeat, linear-gradient(#d6d6de, #d6d6de) 0 50% / 100% 1px no-repeat; }
.zoom::-webkit-slider-thumb { appearance: none; width: 6px; height: 6px; border: 1px solid #111; border-radius: 50%; background: #fff; }
.percent { gap: 5px; margin-left: 2px; }
.full { margin-left: 16px; }
.split { margin-left: 4px; }
```
